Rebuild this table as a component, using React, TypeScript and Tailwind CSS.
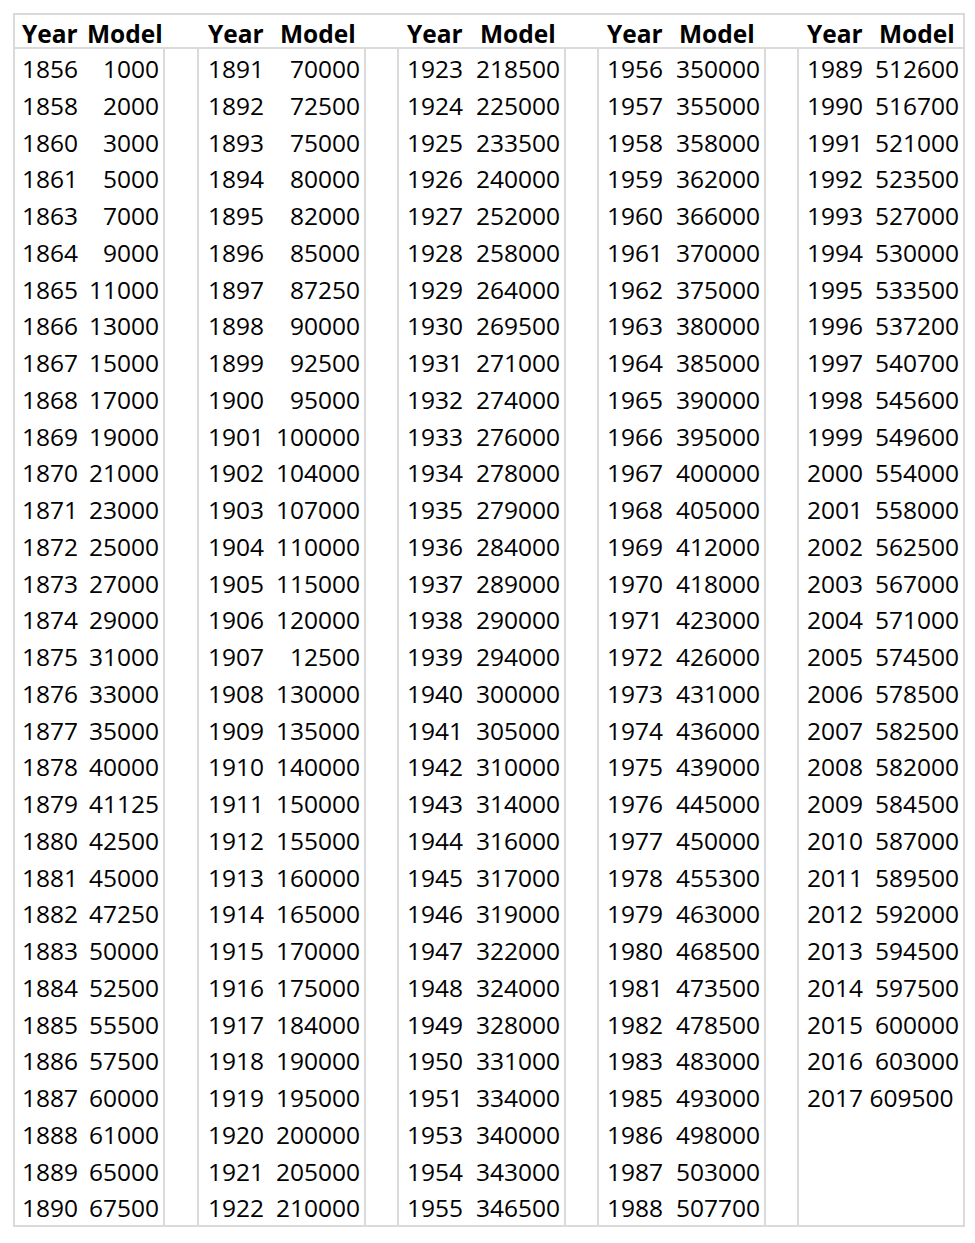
const GROUPS: { w: string; pl: string; mh: string; rows: string[] }[] = [
  {
    w: "w-[148px]",
    pl: "pl-[7px]",
    mh: "pl-[72px]",
    rows: [
      "1856 1000", "1858 2000", "1860 3000", "1861 5000", "1863 7000", "1864 9000", "1865 11000", "1866 13000",
      "1867 15000", "1868 17000", "1869 19000", "1870 21000", "1871 23000", "1872 25000", "1873 27000", "1874 29000",
      "1875 31000", "1876 33000", "1877 35000", "1878 40000", "1879 41125", "1880 42500", "1881 45000", "1882 47250",
      "1883 50000", "1884 52500", "1885 55500", "1886 57500", "1887 60000", "1888 61000", "1889 65000", "1890 67500",
    ],
  },
  {
    w: "w-[165px]",
    pl: "pl-[9px]",
    mh: "pl-[81px]",
    rows: [
      "1891 70000", "1892 72500", "1893 75000", "1894 80000", "1895 82000", "1896 85000", "1897 87250", "1898 90000",
      "1899 92500", "1900 95000", "1901 100000", "1902 104000", "1903 107000", "1904 110000", "1905 115000", "1906 120000",
      "1907 12500", "1908 130000", "1909 135000", "1910 140000", "1911 150000", "1912 155000", "1913 160000", "1914 165000",
      "1915 170000", "1916 175000", "1917 184000", "1918 190000", "1919 195000", "1920 200000", "1921 205000", "1922 210000",
    ],
  },
  {
    w: "w-[165px]",
    pl: "pl-[8px]",
    mh: "pl-[81px]",
    rows: [
      "1923 218500", "1924 225000", "1925 233500", "1926 240000", "1927 252000", "1928 258000", "1929 264000", "1930 269500",
      "1931 271000", "1932 274000", "1933 276000", "1934 278000", "1935 279000", "1936 284000", "1937 289000", "1938 290000",
      "1939 294000", "1940 300000", "1941 305000", "1942 310000", "1943 314000", "1944 316000", "1945 317000", "1946 319000",
      "1947 322000", "1948 324000", "1949 328000", "1950 331000", "1951 334000", "1953 340000", "1954 343000", "1955 346500",
    ],
  },
  {
    w: "w-[165px]",
    pl: "pl-[8px]",
    mh: "pl-[80px]",
    rows: [
      "1956 350000", "1957 355000", "1958 358000", "1959 362000", "1960 366000", "1961 370000", "1962 375000", "1963 380000",
      "1964 385000", "1965 390000", "1966 395000", "1967 400000", "1968 405000", "1969 412000", "1970 418000", "1971 423000",
      "1972 426000", "1973 431000", "1974 436000", "1975 439000", "1976 445000", "1977 450000", "1978 455300", "1979 463000",
      "1980 468500", "1981 473500", "1982 478500", "1983 483000", "1985 493000", "1986 498000", "1987 503000", "1988 507700",
    ],
  },
  {
    w: "w-[164px]",
    pl: "pl-[8px]",
    mh: "pl-[80px]",
    rows: [
      "1989 512600", "1990 516700", "1991 521000", "1992 523500", "1993 527000", "1994 530000", "1995 533500", "1996 537200",
      "1997 540700", "1998 545600", "1999 549600", "2000 554000", "2001 558000", "2002 562500", "2003 567000", "2004 571000",
      "2005 574500", "2006 578500", "2007 582500", "2008 582000", "2009 584500", "2010 587000", "2011 589500", "2012 592000",
      "2013 594500", "2014 597500", "2015 600000", "2016 603000",
    ],
  },
];

const SPACERS = ["w-[36px]", "w-[35px]", "w-[35px]", "w-[35px]"];

export default function App() {
  return (
    <div className="bg-white min-h-[1243px] pt-[13px] pl-[13px] text-[24.5px] text-black [font-family:'Open_Sans',sans-serif]">
      <div className="w-[952px] border-2 border-[#dadada]">
        {/* header */}
        <div className="flex h-[34px] border-b-2 border-[#dadada] font-bold">
          {GROUPS.map((g, i) => (
            <div key={i} className="flex">
              <div className={`${g.w} relative h-[34px] leading-[37px]`}>
                <span className={`absolute left-0 top-0 ${g.pl}`}>Year</span>
                <span className={`absolute left-0 top-0 ${g.mh}`}>Model</span>
              </div>
              {i < SPACERS.length && <div className={SPACERS[i]} />}
            </div>
          ))}
        </div>
        {/* body */}
        <div className="flex">
          {GROUPS.map((g, i) => (
            <div key={i} className="flex">
              <div className={`${g.w} flex flex-col`}>
                {g.rows.map((r) => {
                  const [y, m] = r.split(" ");
                  return (
                    <div key={r} className={`flex h-[36.75px] items-center justify-between pt-[4px] ${g.pl} pr-[4px]`}>
                      <span>{y}</span>
                      <span>{m}</span>
                    </div>
                  );
                })}
                {i === GROUPS.length - 1 && (
                  <div className={`flex h-[36.75px] items-center pt-[4px] ${g.pl}`}>
                    <span>2017 609500</span>
                  </div>
                )}
              </div>
              {i < SPACERS.length && (
                <div className={`${SPACERS[i]} h-[1176px] border-x-2 border-[#dadada]`} />
              )}
            </div>
          ))}
        </div>
      </div>
    </div>
  );
}
